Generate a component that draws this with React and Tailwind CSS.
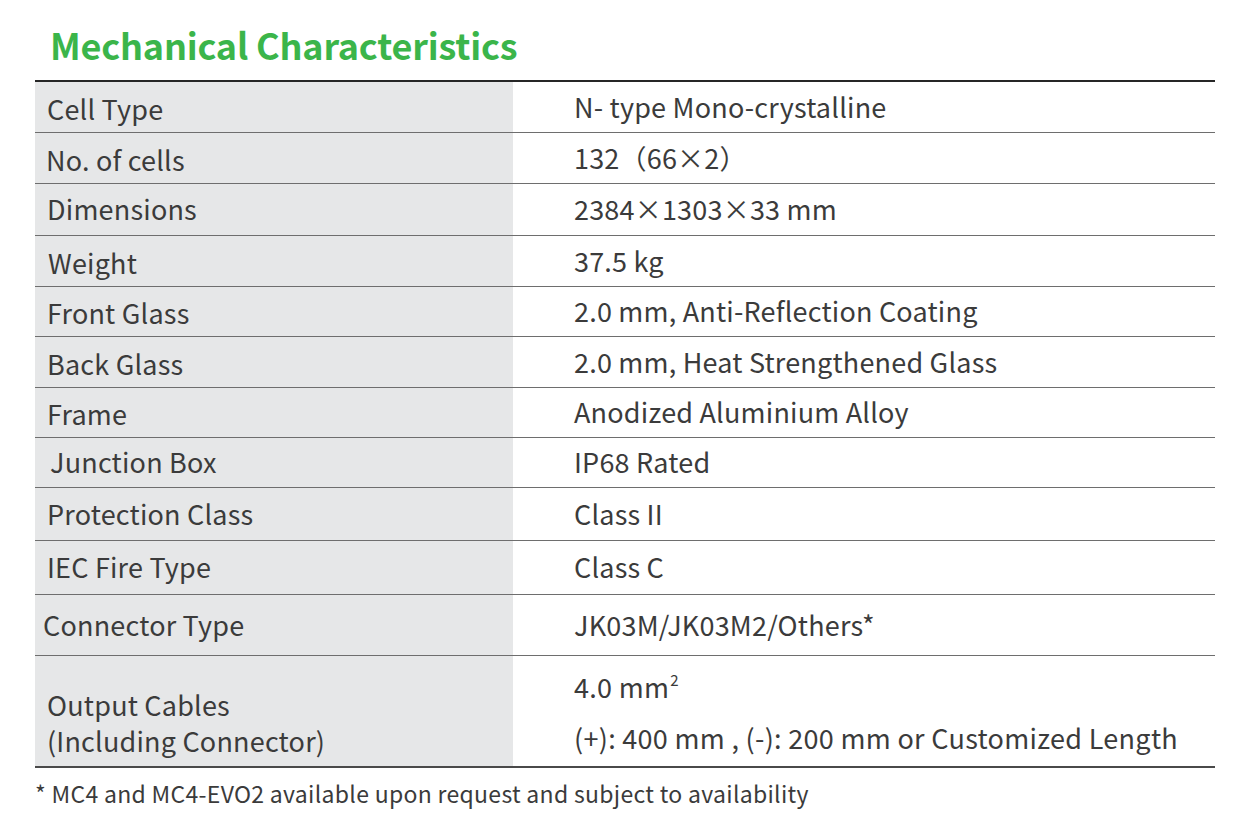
const rows = [
  { label: 'Cell Type', value: 'N- type Mono-crystalline', h: 'h-[51px]', lp: 'pl-[12px] pt-[4px]' },
  { label: 'No. of cells', value: '132（66×2）', h: 'h-[51px]', lp: 'pl-[11px] pt-[4px]' },
  { label: 'Dimensions', value: '2384×1303×33 mm', h: 'h-[52px]', lp: 'pl-[12px]' },
  { label: 'Weight', value: '37.5 kg', h: 'h-[51px]', lp: 'pl-[13px] pt-[4px]' },
  { label: 'Front Glass', value: '2.0 mm, Anti-Reflection Coating', h: 'h-[50px]', lp: 'pl-[12px] pt-[4px]' },
  { label: 'Back Glass', value: '2.0 mm, Heat Strengthened Glass', h: 'h-[51px]', lp: 'pl-[12px] pt-[4px]' },
  { label: 'Frame', value: 'Anodized Aluminium Alloy', h: 'h-[50px]', lp: 'pl-[12px] pt-[4px]' },
  { label: 'Junction Box', value: 'IP68 Rated', h: 'h-[50px]', lp: 'pl-[15px]' },
  { label: 'Protection Class', value: 'Class II', h: 'h-[53px]', lp: 'pl-[12px]' },
  { label: 'IEC Fire Type', value: 'Class C', h: 'h-[54px]', lp: 'pl-[12px]' },
  { label: 'Connector Type', value: 'JK03M/JK03M2/Others*', h: 'h-[61px]', lp: 'pl-[8px]' },
]

export default function App() {
  return (
    <div className="w-[1252px] h-[830px] bg-white text-[#3b3b3b] font-['Noto_Sans_CJK_SC','Noto_Sans',sans-serif]">
      <div className="pl-[35px] pr-[37px] pt-[22px]">
        <h1 className="pl-[15px] text-[36px] leading-[44px] font-bold text-[#3bb54a] tracking-[-0.2px]">
          Mechanical Characteristics
        </h1>

        <div className="mt-[14px] border-t-2 border-[#262626]">
          {rows.map((r) => (
            <div key={r.label} className={`flex border-b border-[#6e6e6e] ${r.h}`}>
              <div className={`w-[478px] bg-[#e6e7e8] flex items-center text-[27px] tracking-[0.2px] ${r.lp}`}>
                {r.label}
              </div>
              <div className="flex-1 flex items-center pl-[61px] text-[27px] tracking-[0.2px]">{r.value}</div>
            </div>
          ))}
          <div className="flex h-[112px] border-b-2 border-[#4a4a4a]">
            <div className="w-[478px] bg-[#e6e7e8] flex flex-col justify-center pl-[12px] pt-[24px] text-[27px] leading-[36px] tracking-[0.2px]">
              <span>Output Cables</span>
              <span>(Including Connector)</span>
            </div>
            <div className="flex-1 flex flex-col pl-[61px] pt-[5px] text-[27px] leading-[51px] tracking-[0.3px]">
              <span>
                4.0 mm<span className="inline-block text-[15px] leading-none relative top-[-12px] ml-[1px]">2</span>
              </span>
              <span>(+): 400 mm , (-): 200 mm or Customized Length</span>
            </div>
          </div>
        </div>

        <p className="mt-[11px] text-[23px] leading-[28px] tracking-[0.3px]">
          * MC4 and MC4-EVO2 available upon request and subject to availability
        </p>
      </div>
    </div>
  )
}
